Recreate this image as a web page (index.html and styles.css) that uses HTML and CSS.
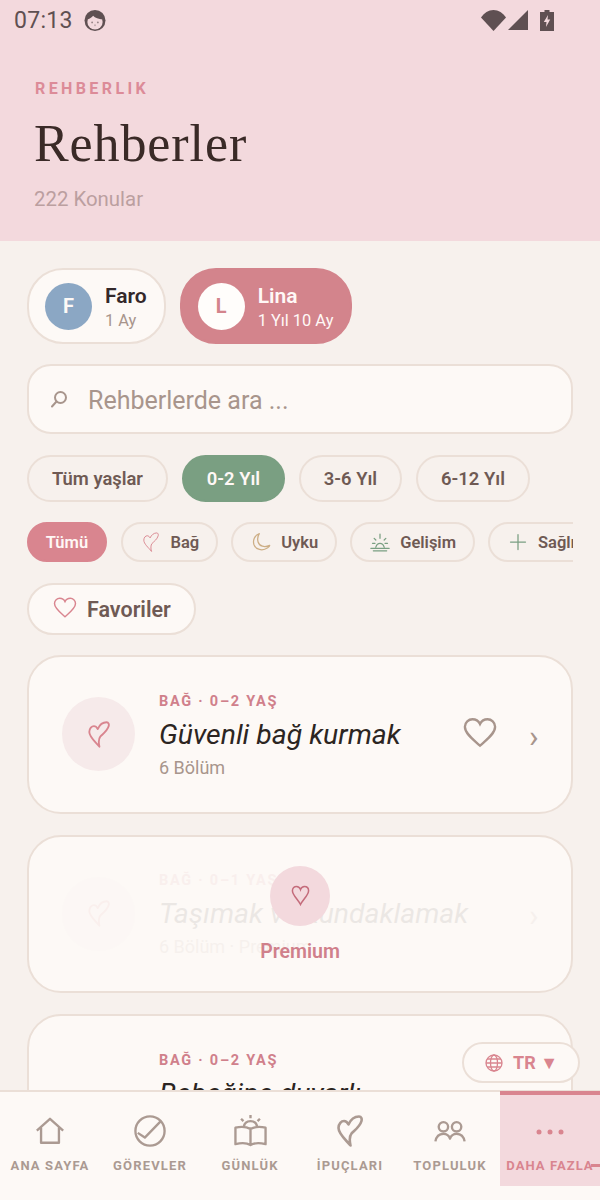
FILE: index.html
```html
<!DOCTYPE html>
<html lang="tr">
<head>
<meta charset="utf-8">
<title>Rehberler</title>
<link rel="stylesheet" href="styles.css">
</head>
<body>
<svg class="defs" width="0" height="0" aria-hidden="true">
  <symbol id="tilt" viewBox="0 0 26 32">
    <path d="M13.500 30.500C9 25 1.500 19 1.500 13C1.500 8.500 4.500 6 7 6C9 6 10.500 7.500 11.500 9.500C13.500 5 17.500 1.500 22 1.500C24.500 1.500 25 4 24.500 6C23 11.500 18 15 14.500 18.500C12.500 21 12.500 26 13.500 30.500Z"/>
  </symbol>
  <symbol id="heart" viewBox="0 0 36 32">
    <path d="M18 30C12 24.500 2 17.500 2 10C2 5 6 2 10 2C13.500 2 16.500 4 18 7C19.500 4 22.500 2 26 2C30 2 34 5 34 10C34 17.500 24 24.500 18 30Z"/>
  </symbol>
  <symbol id="heart-tall" viewBox="0 0 20 22">
    <path d="M10 20.500C7.500 15.500 1.500 10.500 1.500 6C1.500 3.200 3.500 1.500 5.800 1.500C7.800 1.500 9.300 2.800 10 4.800C10.700 2.800 12.200 1.500 14.200 1.500C16.500 1.500 18.500 3.200 18.500 6C18.500 10.500 12.500 15.500 10 20.500Z"/>
  </symbol>
</svg>
<div class="phone">
  <header class="hero">
    <div class="status">
      <div class="status-left">
        <span class="clock">07:13</span>
        <svg class="face" viewBox="0 0 22 22">
          <circle cx="11" cy="11" r="11" fill="#5f5052"/>
          <circle cx="11" cy="12.500" r="8" fill="#f3d9dd"/>
          <path d="M3 10C6 9 8 7.500 9 6C11 8.500 15 9.500 19 10L17 4H5Z" fill="#5f5052"/>
          <circle cx="8" cy="13" r="1" fill="#5f5052" opacity=".6"/>
          <circle cx="14" cy="13" r="1" fill="#5f5052" opacity=".6"/>
          <circle cx="11" cy="16" r="1" fill="#5f5052" opacity=".35"/>
        </svg>
      </div>
      <div class="status-right">
        <svg class="wifi" viewBox="0 0 25 21"><path d="M0 7.500C3 3 7.500 0 12.500 0S22 3 25 7.500L12.500 21Z" fill="#5f5052"/></svg>
        <svg class="signal" viewBox="0 0 20 20"><path d="M20 0V20H0Z" fill="#5f5052"/></svg>
        <svg class="battery" viewBox="0 0 14 21"><path d="M4.500 0H9.500V2H14V21H0V2H4.500Z" fill="#5f5052"/><path d="M8 5L3.800 12H6.500L6 17L10.200 9.500H7.500Z" fill="#f3d9dd"/></svg>
      </div>
    </div>
    <div class="eyebrow">REHBERLIK</div>
    <h1 class="title">Rehberler</h1>
    <div class="count">222 Konular</div>
  </header>

  <main class="content">
    <div class="profiles">
      <div class="profile">
        <span class="avatar avatar-blue">F</span>
        <span class="profile-text"><b class="profile-name">Faro</b><span class="profile-age">1 Ay</span></span>
      </div>
      <div class="profile profile-on">
        <span class="avatar avatar-white">L</span>
        <span class="profile-text"><b class="profile-name">Lina</b><span class="profile-age">1 Yıl 10 Ay</span></span>
      </div>
    </div>

    <div class="search">
      <svg class="search-icon" viewBox="0 0 18 18"><circle cx="10.500" cy="7.500" r="5.500"/><path d="M6.500 11.500L2 16.500"/></svg>
      <span class="search-text">Rehberlerde ara ...</span>
    </div>

    <div class="ages">
      <span class="age age-wide">Tüm yaşlar</span>
      <span class="age age-on">0-2 Yıl</span>
      <span class="age">3-6 Yıl</span>
      <span class="age">6-12 Yıl</span>
    </div>

    <div class="cats">
      <span class="cat cat-on">Tümü</span>
      <span class="cat"><svg class="cat-icon cat-icon-tilt stroke-rose"><use href="#tilt"/></svg>Bağ</span>
      <span class="cat"><svg class="cat-icon stroke-sand" viewBox="0 0 24 24"><path d="M10 2C4 4 2 10 3.500 15C5.500 21 13.500 23.500 20 19C22 17.500 22.500 17 22.500 16C16 19 10 17 8.500 12C7.500 8.500 8 5 10 2Z"/></svg>Uyku</span>
      <span class="cat"><svg class="cat-icon cat-icon-sun stroke-sage" viewBox="0 0 24 22"><path d="M12 1V6M5 6L7 8M19 6L17 8M3 12H6M18 12H21M1 18H23M7 16.500C8 13.500 10 12 12 12S16 13.500 17 16.500M4 21H20"/></svg>Gelişim</span>
      <span class="cat"><svg class="cat-icon stroke-sage" viewBox="0 0 24 24"><path d="M12 3V21M3 12H21"/></svg>Sağlık</span>
    </div>

    <div class="fav"><svg class="fav-heart"><use href="#heart"/></svg>Favoriler</div>

    <article class="card">
      <span class="card-badge"><svg class="card-badge-icon"><use href="#tilt"/></svg></span>
      <div class="card-body">
        <div class="card-tag">BAĞ · 0–2 YAŞ</div>
        <div class="card-title">Güvenli bağ kurmak</div>
        <div class="card-meta">6 Bölüm</div>
      </div>
      <svg class="card-like"><use href="#heart"/></svg>
      <span class="card-arrow">›</span>
    </article>

    <article class="card">
      <div class="card-locked">
        <span class="card-badge"><svg class="card-badge-icon"><use href="#tilt"/></svg></span>
        <div class="card-body">
          <div class="card-tag">BAĞ · 0–1 YAŞ</div>
          <div class="card-title">Taşımak ve kundaklamak</div>
          <div class="card-meta">6 Bölüm · Premium</div>
        </div>
        <span class="card-arrow">›</span>
      </div>
      <div class="lock">
        <span class="lock-circle"><svg class="lock-heart"><use href="#heart-tall"/></svg></span>
        <span class="lock-label">Premium</span>
      </div>
    </article>

    <article class="card">
      <span class="card-badge card-badge-empty"></span>
      <div class="card-body">
        <div class="card-tag">BAĞ · 0–2 YAŞ</div>
        <div class="card-title">Bebeğine duyarlı</div>
        <div class="card-meta">6 Bölüm</div>
      </div>
    </article>
  </main>

  <div class="lang">
    <svg class="globe" viewBox="0 0 18 18"><circle cx="9" cy="9" r="8"/><ellipse cx="9" cy="9" rx="3.500" ry="8"/><path d="M1 9H17M2 5H16M2 13H16"/></svg>
    <span class="lang-code">TR ▼</span>
  </div>

  <nav class="nav">
    <div class="tab">
      <svg class="tab-icon" viewBox="0 0 34 32"><path d="M3 15.500L17 3L31 15.500M7.500 12.500V28.500H26.500V12.500"/></svg>
      <span class="tab-label">ANA SAYFA</span>
    </div>
    <div class="tab">
      <svg class="tab-icon" viewBox="0 0 34 34"><circle cx="17" cy="17" r="15.500"/><path d="M4 19L11.500 24L29 6"/></svg>
      <span class="tab-label">GÖREVLER</span>
    </div>
    <div class="tab">
      <svg class="tab-icon tab-icon-book" viewBox="0 0 36 34"><path d="M18 13V32M18 32C14 29.500 8 29.500 2 31V13.500C8 12 14 12.500 18 15C22 12.500 28 12 34 13.500V31C28 29.500 22 29.500 18 32ZM11 12.500C11.500 8.500 14.500 6.500 18 6.500S24.500 8.500 25 12.500M18 0V3.500M8 4L10.500 6.500M28 4L25.500 6.500"/></svg>
      <span class="tab-label">GÜNLÜK</span>
    </div>
    <div class="tab">
      <svg class="tab-icon tab-icon-tilt"><use href="#tilt"/></svg>
      <span class="tab-label">İPUÇLARI</span>
    </div>
    <div class="tab">
      <svg class="tab-icon tab-icon-people" viewBox="0 0 34 24"><circle cx="10" cy="6.500" r="5"/><circle cx="24" cy="6.500" r="5"/><path d="M1.500 22C2.500 16.500 6 14 10 14C13.500 14 16 16 17 19C18 16 20.500 14 24 14C28 14 31.500 16.500 32.500 22"/></svg>
      <span class="tab-label">TOPLULUK</span>
    </div>
    <div class="tab tab-on">
      <svg class="tab-dots" viewBox="0 0 28 6"><circle cx="3" cy="3" r="2.500"/><circle cx="14" cy="3" r="2.500"/><circle cx="25" cy="3" r="2.500"/></svg>
      <span class="tab-label">DAHA FAZLA</span>
    </div>
  </nav>
</div>
</body>
</html>
```
FILE: styles.css
```css
* { box-sizing: border-box; }
html, body { margin: 0; padding: 0; }
body { font-family: Roboto, "Liberation Sans", sans-serif; background: #f7f1ed; }
.defs { position: absolute; }
.phone { position: relative; width: 600px; height: 1200px; overflow: hidden; display: flex; flex-direction: column; background: #f7f1ed; }

.hero { height: 241px; flex: none; background: #f3d9dd; padding: 0 34px; }
.status { height: 40px; margin: 0 -34px; padding: 0 46px 0 14px; display: flex; justify-content: space-between; align-items: center; }
.status-left { display: flex; align-items: center; gap: 11px; }
.clock { font-size: 23px; font-weight: 400; color: #5f5052; letter-spacing: .3px; }
.face { width: 22px; height: 21px; }
.status-right { display: flex; align-items: center; }
.wifi { width: 25px; height: 21px; }
.signal { width: 20px; height: 20px; margin-left: 2px; }
.battery { width: 14px; height: 21px; margin-left: 12px; }
.eyebrow { margin: 41px 0 0 1px; font-size: 16px; line-height: 16px; font-weight: 700; letter-spacing: 3.400px; color: #dc8b98; }
.title { margin: 17px 0 0; font-family: "Liberation Serif", serif; font-size: 52px; line-height: 60px; font-weight: 400; letter-spacing: .9px; color: #3a2a27; }
.count { margin-top: 13px; font-size: 20.400px; line-height: 24px; font-weight: 400; color: #bb9fa0; }

.content { flex: 1; min-height: 0; overflow: hidden; padding: 27px 27px 0; display: flex; flex-direction: column; }
.profiles { display: flex; gap: 14px; flex: none; }
.profile { height: 76px; display: flex; align-items: center; gap: 13px; padding: 0 17px 0 16px; border: 2px solid #ebdfd7; border-radius: 36px; background: #fdf9f6; }
.profile-on { background: #d3848c; border-color: #d3848c; }
.avatar { width: 47px; height: 47px; border-radius: 50%; display: flex; align-items: center; justify-content: center; font-size: 20px; font-weight: 700; }
.avatar-blue { background: #8ba7c4; color: #fdf9f6; }
.avatar-white { background: #fffdfb; color: #d3848c; }
.profile-text { display: flex; flex-direction: column; padding-top: 3px; }
.profile-name { font-size: 21px; line-height: 26px; font-weight: 600; color: #33282a; }
.profile-age { font-size: 16.400px; line-height: 24px; color: #a8958c; }
.profile-on .profile-name, .profile-on .profile-age { color: #fff8f6; }

.search { height: 70px; flex: none; margin-top: 20px; display: flex; align-items: center; gap: 20px; padding-left: 21px; border: 2px solid #ebdfd7; border-radius: 24px; background: #fdf9f6; }
.search-icon { width: 18px; height: 18px; fill: none; stroke: #a8958c; stroke-width: 2; stroke-linecap: round; }
.search-text { font-size: 25px; color: #a8958c; padding-top: 2px; }

.ages { display: flex; gap: 14px; margin-top: 21px; flex: none; }
.age { width: 103px; height: 47px; display: flex; align-items: center; justify-content: center; border: 2px solid #ebdfd7; border-radius: 24px; font-size: 18.400px; font-weight: 600; color: #6f5a54; white-space: nowrap; }
.age-wide { width: 141px; }
.age:last-child { width: 114px; }
.age-on { background: #7a9f82; border-color: #7a9f82; color: #fff8f6; }

.cats { display: flex; gap: 13.500px; margin-top: 20px; overflow: hidden; flex: none; }
.cat { flex: none; height: 40px; display: flex; align-items: center; gap: 10px; padding: 0 16.500px 0 18px; border: 2px solid #ebdfd7; border-radius: 20px; font-size: 16.500px; font-weight: 600; color: #6f5a54; }
.cat-on { width: 80px; justify-content: center; padding: 0; background: #d9858f; border-color: #d9858f; color: #fff8f6; }
.cat-icon { width: 20px; height: 20px; fill: none; stroke-width: 1.500; stroke-linejoin: round; stroke-linecap: round; }
.cat-icon-sun { width: 20px; height: 19px; }
.stroke-rose { stroke: #d9858f; }
.stroke-sand { stroke: #cdae85; }
.stroke-sage { stroke: #7a9f82; }

.fav { width: 169px; height: 52px; flex: none; margin-top: 21px; display: flex; align-items: center; gap: 10px; padding-left: 24px; border: 2px solid #ebdfd7; border-radius: 26px; background: #fdf9f6; font-size: 21.500px; font-weight: 600; color: #6f5a54; }
.fav-heart { width: 24px; height: 21px; margin-top: -4px; fill: none; stroke: #d9858f; stroke-width: 2.200; overflow: visible; }

.card { position: relative; flex: none; height: 158.500px; margin-top: 21px; display: flex; align-items: center; padding: 0 33px; border: 2px solid #ebdfd7; border-radius: 34px; background: #fdf9f6; }
.fav + .card { margin-top: 20px; }
.card-badge { width: 73px; height: 74px; flex: none; display: flex; align-items: center; justify-content: center; border-radius: 50%; background: #f6eaea; }
.card-badge-empty { background: none; }
.card-badge-icon { width: 22px; height: 27px; fill: none; stroke: #d9858f; stroke-width: 2.200; stroke-linejoin: round; }
.card-body { margin-left: 24px; min-width: 0; flex: 1; padding-top: 3px; }
.card-tag { font-size: 14.500px; line-height: 18px; font-weight: 700; letter-spacing: 1.750px; color: #d0808b; }
.card-title { margin-top: 5px; font-size: 28.400px; line-height: 38px; font-style: italic; font-weight: 400; color: #2c2522; white-space: nowrap; }
.card-meta { margin-top: 3px; font-size: 18px; line-height: 22px; color: #a8958c; }
.card-like { width: 34px; height: 31px; margin: -3px 32px 0 0; fill: none; stroke: #a8958c; stroke-width: 2.500; overflow: visible; }
.card-arrow { width: 9px; margin-top: 3px; font-size: 32px; line-height: 28px; color: #a8958c; }
.card-locked { display: flex; align-items: center; width: 100%; opacity: .08; }
.lock { position: absolute; inset: 29px 0 0; display: flex; flex-direction: column; align-items: center; }
.lock-circle { width: 60px; height: 60px; display: flex; align-items: center; justify-content: center; border-radius: 50%; background: #f3d9dd; }
.lock-heart { width: 19px; height: 21px; fill: none; stroke: #c46c7b; stroke-width: 1.600; }
.lock-label { margin-top: 13px; font-size: 19.500px; line-height: 26px; font-weight: 600; color: #d0808b; }

.lang { position: absolute; left: 462px; top: 1042px; width: 118px; height: 41px; display: flex; align-items: center; gap: 10px; padding-left: 21px; border: 2px solid #ebdfd7; border-radius: 21px; background: #fdf9f6; }
.globe { width: 18px; height: 18px; fill: none; stroke: #d9858f; stroke-width: 1.300; }
.lang-code { font-size: 18px; font-weight: 700; color: #d9858f; white-space: nowrap; }

.nav { height: 110px; flex: none; display: flex; align-items: flex-start; border-top: 2px solid #ebdfd7; background: #fdf9f6; position: relative; }
.tab { width: 100px; height: 95px; flex: none; display: flex; flex-direction: column; align-items: center; position: relative; padding-top: 23px; }
.tab-icon { width: 32px; height: 32px; fill: none; stroke: #ab9a92; stroke-width: 2.500; stroke-linejoin: round; overflow: visible; }
.tab-icon-book { width: 35px; }
.tab-icon-tilt { width: 26px; stroke-width: 2.600; }
.tab-icon-people { width: 32px; height: 24px; margin: 5px 0 3px; }
.tab-label { margin-top: 11px; font-size: 13px; line-height: 16px; font-weight: 700; letter-spacing: 1.150px; color: #ab9a92; white-space: nowrap; }
.tab-on { background: #f3d9dd; border-top: 4px solid #d9858f; margin-top: -1px; padding-top: 34px; }
.tab-on .tab-label { color: #d9858f; margin-top: 23px; letter-spacing: 1.050px; }
.tab-on::after { content: ""; position: absolute; right: 0; top: 69px; width: 9px; height: 3px; background: #d9858f; }
.tab-dots { width: 28px; height: 6px; fill: #d9858f; }
```
